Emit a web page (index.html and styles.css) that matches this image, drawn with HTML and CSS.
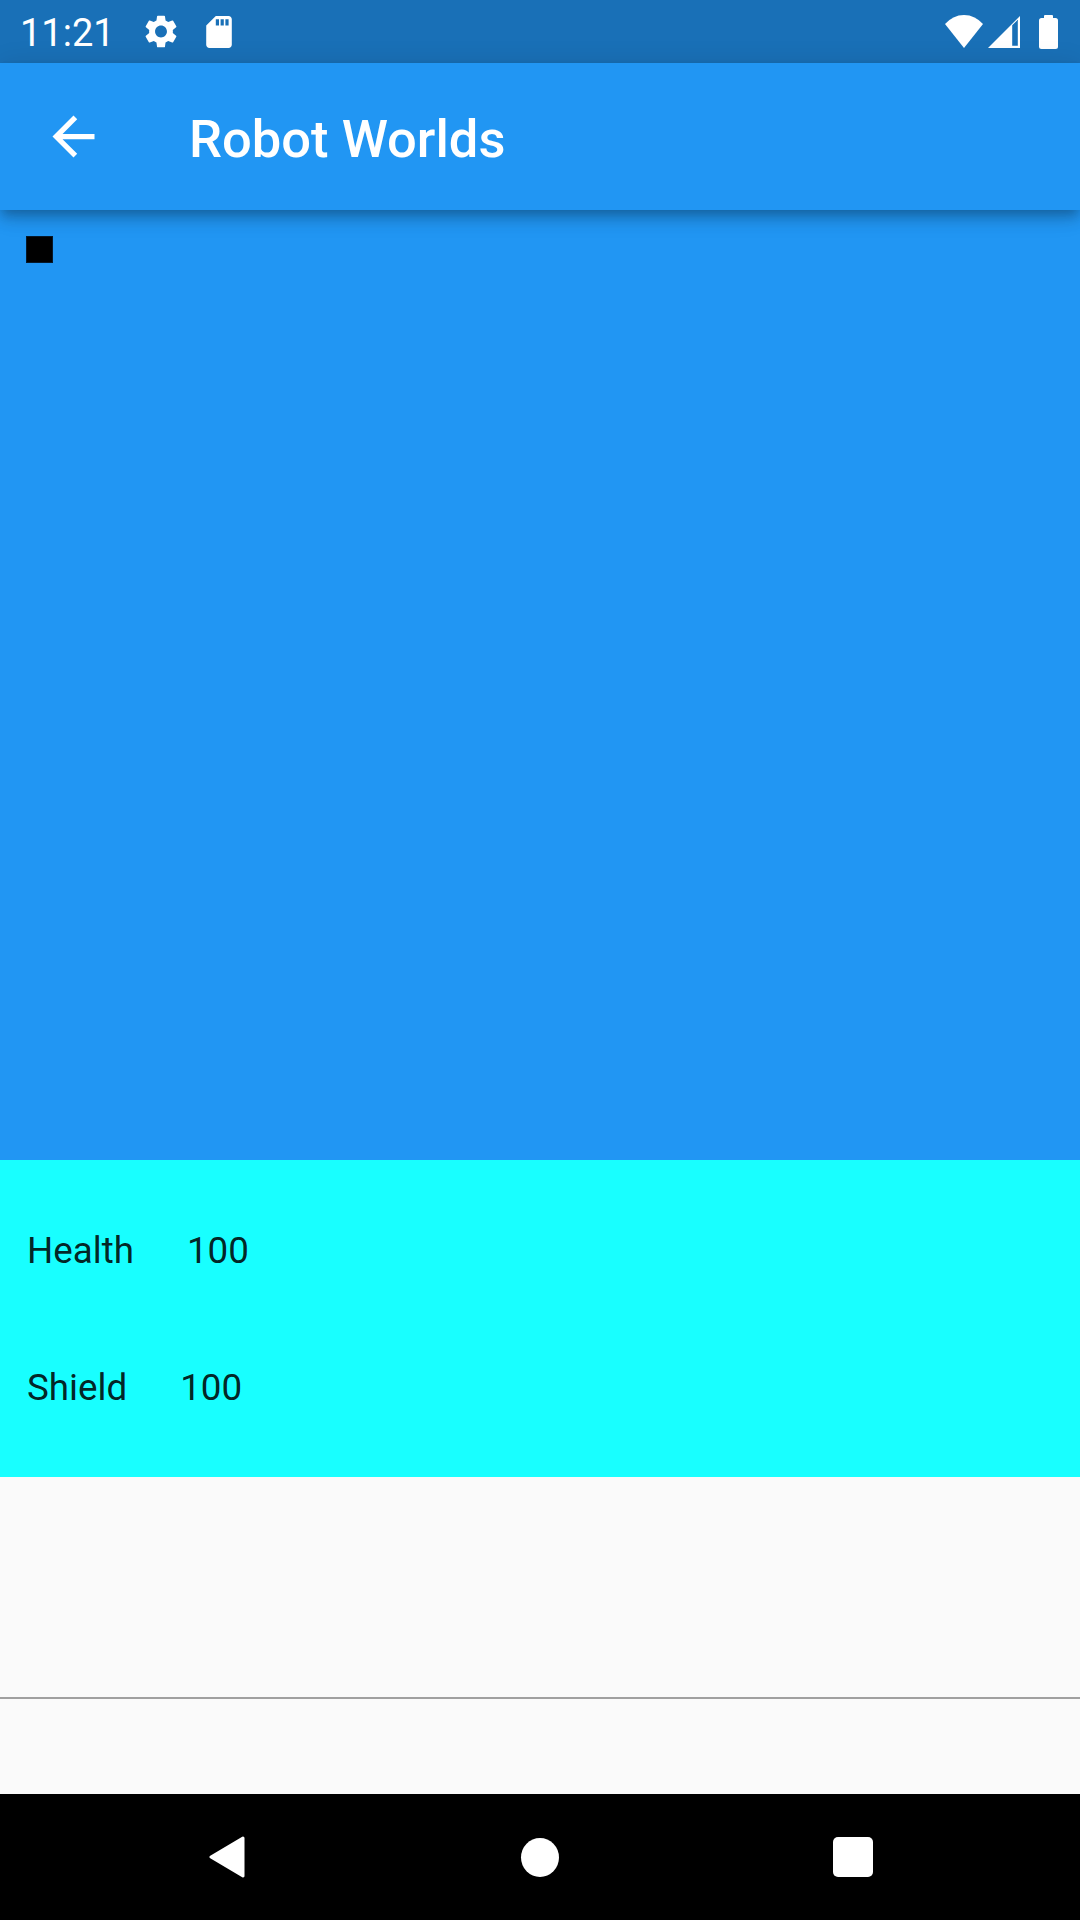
FILE: index.html
```html
<!DOCTYPE html>
<html lang="en">
<head>
<meta charset="utf-8">
<title>Robot Worlds</title>
<link rel="stylesheet" href="styles.css">
</head>
<body>
<div class="screen">
  <div class="statusbar">
    <div class="status-left">
      <span class="clock">11:21</span>
      <svg class="ic-gear" viewBox="2.6 2 18.8 20" width="32" height="33" aria-hidden="true">
        <path fill="#fff" d="M19.14 12.94c.04-.3.06-.61.06-.94 0-.32-.02-.64-.07-.94l2.03-1.58a.49.49 0 0 0 .12-.61l-1.92-3.32a.488.488 0 0 0-.59-.22l-2.39.96c-.5-.38-1.03-.7-1.620-.94l-.36-2.54a.484.484 0 0 0-.48-.41h-3.84c-.24 0-.43.17-.47.41l-.36 2.54c-.59.24-1.130.57-1.62.94l-2.39-.96c-.22-.08-.47 0-.59.22L2.74 8.87c-.12.21-.08.47.12.61l2.03 1.58c-.05.3-.09.63-.09.94s.02.64.07.94l-2.030 1.58a.49.49 0 0 0-.12.61l1.92 3.32c.12.22.37.29.59.22l2.39-.96c.5.38 1.03.7 1.62.94l.36 2.54c.05.24.24.41.48.41h3.84c.24 0 .44-.17.47-.41l.36-2.54c.59-.24 1.13-.56 1.62-.94l2.39.96c.22.08.47 0 .59-.22l1.92-3.32c.12-.22.07-.47-.12-.61l-2.01-1.58zM12 15.6c-1.98 0-3.6-1.62-3.6-3.6s1.62-3.6 3.6-3.6 3.6 1.62 3.6 3.6-1.62 3.6-3.6 3.6z"/>
      </svg>
      <svg class="ic-sd" viewBox="4 2 16 20" width="26" height="32" aria-hidden="true">
        <path fill="#fff" d="M18 2h-8L4.02 8 4 20c0 1.1.9 2 2 2h12c1.1 0 2-.9 2-2V4c0-1.1-.9-2-2-2zm-6 6h-2V4h2v4zm3 0h-2V4h2v4zm3 0h-2V4h2v4z"/>
      </svg>
    </div>
    <div class="status-right">
      <svg class="ic-wifi" viewBox="0 0 38 33" width="38" height="33" aria-hidden="true">
        <path fill="#fff" d="M0 9 A24.6 24.6 0 0 1 38 9 L19 33 Z"/>
      </svg>
      <svg class="ic-signal" viewBox="0 0 32 32" width="32" height="32" aria-hidden="true">
        <path fill="#fff" d="M0 32 L22 10 L22 32 Z"/>
        <path fill="#fff" fill-rule="evenodd" d="M22 10 L32 0 L32 32 L22 32 Z M24.2 9.2 L29.8 3.8 L29.8 29.8 L24.2 29.8 Z"/>
      </svg>
      <svg class="ic-battery" viewBox="0 0 19 34" width="19" height="34" aria-hidden="true">
        <rect x="5" y="0" width="9" height="4" rx="1" fill="#fff"/>
        <rect x="0" y="3" width="19" height="31" rx="2.5" fill="#fff"/>
      </svg>
    </div>
  </div>

  <header class="appbar">
    <button class="back" aria-label="Back">
      <svg viewBox="0 0 24 24" width="63" height="63" aria-hidden="true">
        <path fill="#fff" d="M20 11H7.83l5.59-5.59L12 4l-8 8 8 8 1.41-1.41L7.83 13H20v-2z"/>
      </svg>
    </button>
    <h1 class="title">Robot Worlds</h1>
  </header>

  <main class="world">
    <div class="robot"></div>
  </main>

  <section class="stats">
    <div class="stat-row"><span>Health</span><span>100</span></div>
    <div class="stat-row"><span>Shield</span><span>100</span></div>
  </section>

  <section class="command">
    <div class="field"></div>
  </section>

  <nav class="navbar">
    <div class="nav-item">
      <svg viewBox="0 0 36 42" width="36" height="42" aria-hidden="true">
        <polygon points="34,2 2,21 34,40" fill="#fff" stroke="#fff" stroke-width="3" stroke-linejoin="round"/>
      </svg>
    </div>
    <div class="nav-item"><div class="nav-home"></div></div>
    <div class="nav-item"><div class="nav-recent"></div></div>
  </nav>
</div>
</body>
</html>
```

FILE: styles.css
```css
* { box-sizing: border-box; }

html, body {
  margin: 0;
  padding: 0;
  background: #fafafa;
}

body {
  font-family: Roboto, "Noto Sans", "Liberation Sans", sans-serif;
}

.screen {
  width: 1080px;
  height: 1920px;
  overflow: hidden;
  display: flex;
  flex-direction: column;
}

/* Status bar */
.statusbar {
  height: 63px;
  flex: 0 0 63px;
  background: #1970b7;
  display: flex;
  align-items: center;
  justify-content: space-between;
  padding: 0 22px 0 20px;
  color: #fff;
}

.status-left {
  display: flex;
  align-items: center;
}

.clock {
  font-size: 38px;
  font-weight: 400;
  margin-top: 3px;
  margin-right: 30px;
}

.ic-gear { margin-right: 29px; display: block; }
.ic-sd { display: block; }

.status-right {
  display: flex;
  align-items: center;
}

.ic-wifi { display: block; margin-right: 5px; }
.ic-signal { display: block; margin-right: 19px; }
.ic-battery { display: block; }

/* App bar */
.appbar {
  position: relative;
  z-index: 2;
  height: 147px;
  flex: 0 0 147px;
  background: #2196f3;
  display: flex;
  align-items: center;
  padding-left: 42px;
  box-shadow: 0 5px 10px -3px rgba(0,0,0,.2), 0 10px 13px 0 rgba(0,0,0,.14), 0 3px 26px 0 rgba(0,0,0,.12);
}

.back {
  width: 63px;
  height: 63px;
  padding: 0;
  border: 0;
  background: none;
  display: block;
}

.back svg { display: block; }

.title {
  margin: 4px 0 0 84px;
  font-size: 52.5px;
  font-weight: 500;
  color: #fff;
}

/* World canvas */
.world {
  height: 950px;
  flex: 0 0 950px;
  background: #2196f3;
  padding: 26px 0 0 26px;
}

.robot {
  width: 27px;
  height: 27px;
  background: #000;
  box-shadow: 0 0 0 1px rgba(10, 40, 70, .6) inset;
}

/* Stats */
.stats {
  height: 317px;
  flex: 0 0 317px;
  background: #18ffff;
  padding: 69px 0 0 27px;
  display: flex;
  flex-direction: column;
  gap: 94px;
}

.stat-row {
  display: flex;
  gap: 53px;
  font-size: 36.75px;
  line-height: 43px;
  color: rgba(0, 0, 0, .87);
}

/* Command input */
.command {
  height: 317px;
  flex: 0 0 317px;
  background: #fafafa;
}

.field {
  height: 222px;
  border-bottom: 2px solid #a0a0a0;
}

/* Navigation bar */
.navbar {
  flex: 1 0 126px;
  background: #000;
  display: grid;
  grid-template-columns: repeat(3, 120px);
  column-gap: 193px;
  justify-content: center;
  align-items: center;
}

.nav-item {
  display: flex;
  justify-content: center;
  align-items: center;
}

.nav-item svg { display: block; }

.nav-home {
  width: 38px;
  height: 39px;
  border-radius: 50%;
  background: #fff;
}

.nav-recent {
  width: 40px;
  height: 40px;
  border-radius: 5px;
  background: #fff;
}
```
